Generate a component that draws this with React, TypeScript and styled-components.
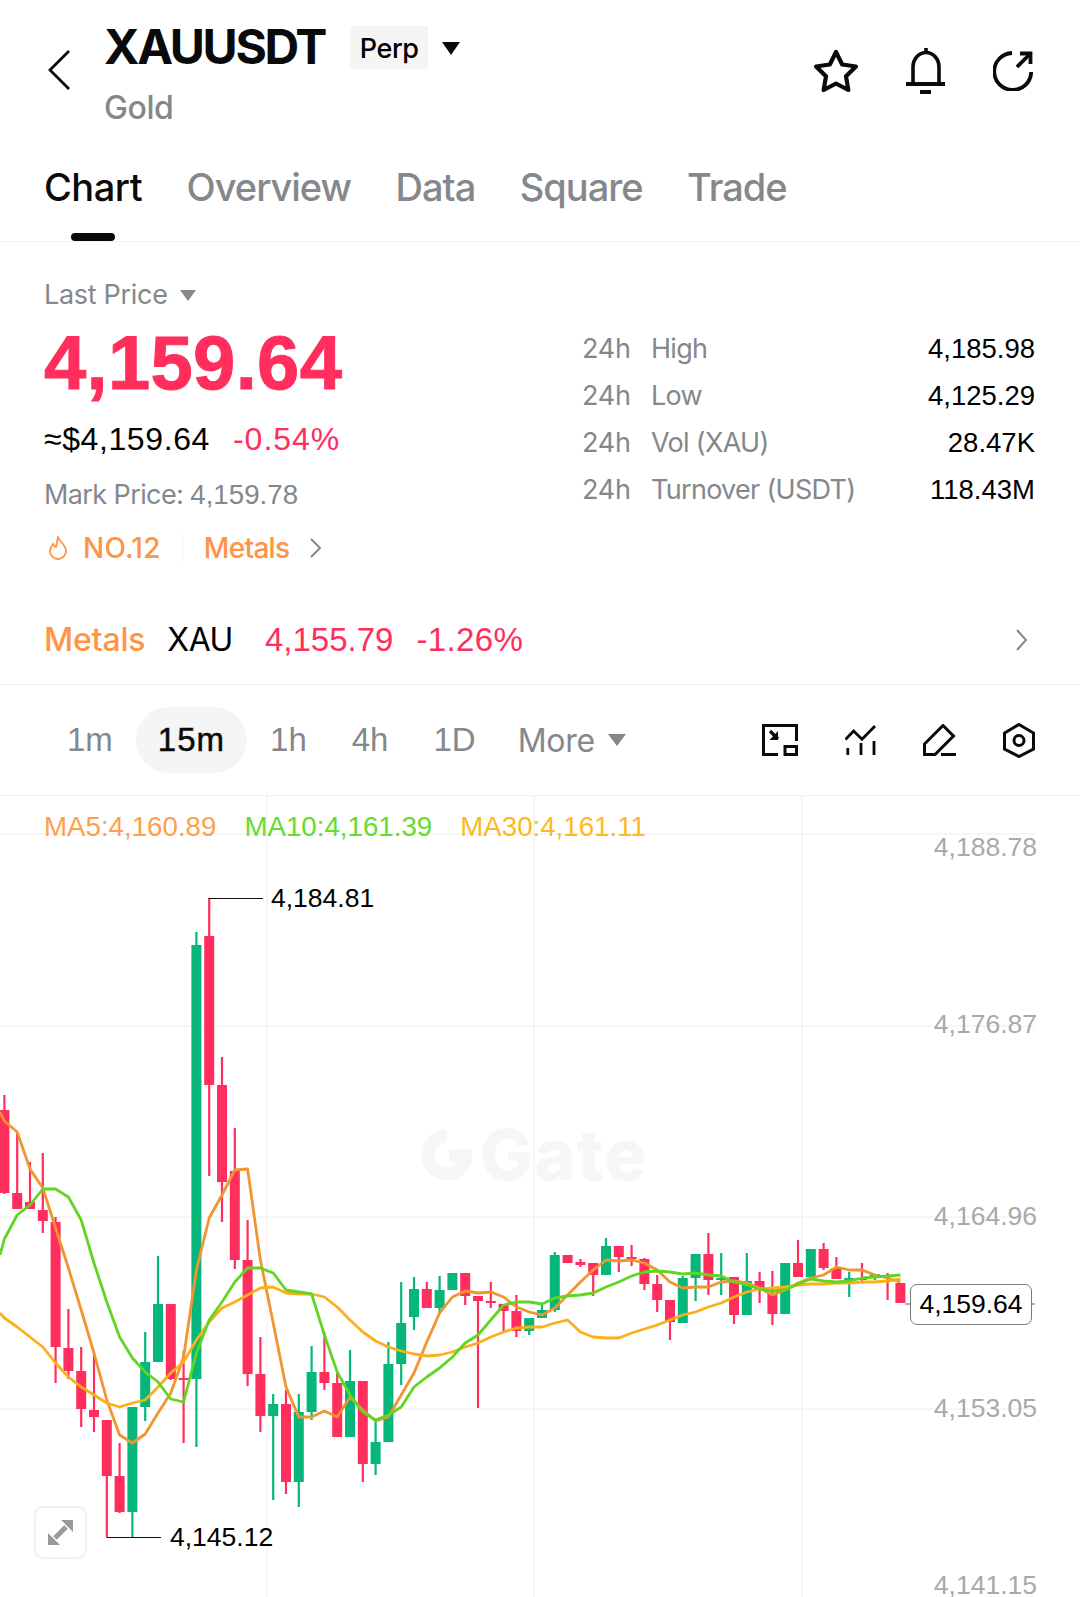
import React from 'react'
import styled, { createGlobalStyle } from 'styled-components'

const RED = '#ff2e5d'
const GREEN = '#07b67a'
const GRAY = '#84888c'
const ORANGE = '#ff9447'
// figures in the reference have Arial widths, labels are closer to Inter
const NUM = '"Liberation Sans", Arial, sans-serif'

const GlobalStyle = createGlobalStyle`
  html, body {
    margin: 0;
    padding: 0;
    background: #fff;
  }
  body {
    font-family: Inter, "Liberation Sans", sans-serif;
    color: #000;
  }
  * {
    box-sizing: border-box;
  }
`

const Page = styled.div`
  width: 1080px;
  height: 1597px;
  overflow: hidden;
  display: flex;
  flex-direction: column;
  background: #fff;
`

const Header = styled.header`
  height: 140px;
  display: flex;
  align-items: center;
  padding: 0 47px 0 48px;
  flex-shrink: 0;
`

const BackIcon = styled.svg`
  width: 22px;
  height: 40px;
  margin-right: 34px;
  flex-shrink: 0;
`

const TitleBlock = styled.div`
  align-self: flex-start;
  padding-top: 23px;
  display: flex;
  flex-direction: column;
`

const TitleRow = styled.div`
  display: flex;
  align-items: center;
  height: 48px;
`

const Symbol = styled.h1`
  margin: 0;
  font-size: 48px;
  line-height: 48px;
  font-weight: 700;
  letter-spacing: -2.3px;
  color: #0a0a0a;
`

const Tag = styled.span`
  margin-left: 25px;
  width: 78px;
  height: 43px;
  padding-top: 3px;
  background: #f5f5f5;
  font-size: 27px;
  font-weight: 500;
  letter-spacing: -0.4px;
  display: flex;
  align-items: center;
  justify-content: center;
`

const Caret = styled.i<{ $size: number; $color: string }>`
  display: inline-block;
  width: 0;
  height: 0;
  border-left: ${({ $size }) => $size}px solid transparent;
  border-right: ${({ $size }) => $size}px solid transparent;
  border-top: ${({ $size }) => $size * 1.4}px solid ${({ $color }) => $color};
`

const TagCaret = styled(Caret)`
  margin: 3px 0 0 14px;
`

const SubName = styled.div`
  margin-top: 19px;
  font-size: 32px;
  line-height: 36px;
  font-weight: 500;
  letter-spacing: -0.4px;
  color: ${GRAY};
`

const HeaderActions = styled.div`
  margin-left: auto;
  display: flex;
  align-items: center;
  gap: 47px;
  padding-top: 1px;
`

const Tabs = styled.nav`
  height: 102px;
  display: flex;
  gap: 44.5px;
  padding: 0 44px;
  border-bottom: 1px solid #f2f2f2;
  flex-shrink: 0;
`

const Tab = styled.div<{ $active?: boolean }>`
  position: relative;
  height: 101px;
  padding-top: 24px;
  font-size: 38px;
  line-height: 46px;
  font-weight: 500;
  letter-spacing: ${({ $active }) => ($active ? '-0.5px' : '-1px')};
  color: ${({ $active }) => ($active ? '#0a0a0a' : GRAY)};

  &::after {
    content: '';
    display: ${({ $active }) => ($active ? 'block' : 'none')};
    position: absolute;
    left: 27px;
    bottom: 0;
    width: 44px;
    height: 8px;
    border-radius: 4px;
    background: #0a0a0a;
  }
`

const Stats = styled.section`
  display: flex;
  justify-content: space-between;
  padding: 36px 45px 29px 44px;
  flex-shrink: 0;
`

const PriceCol = styled.div`
  display: flex;
  flex-direction: column;
`

const PriceLabel = styled.div`
  display: flex;
  align-items: center;
  gap: 12px;
  font-size: 27px;
  line-height: 34px;
  letter-spacing: -0.3px;
  color: ${GRAY};
`

const BigPrice = styled.div`
  margin-top: 6px;
  font-family: ${NUM};
  font-size: 76px;
  line-height: 90px;
  font-weight: 700;
  letter-spacing: 0.3px;
  color: ${RED};
  -webkit-text-stroke: 1px ${RED};
`

const Approx = styled.div`
  margin-top: 11px;
  display: flex;
  gap: 23px;
  font-family: ${NUM};
  font-size: 32px;
  line-height: 40px;
  letter-spacing: 0.6px;
`

const Change = styled.span`
  color: ${RED};
  letter-spacing: 1px;
`

const MarkPrice = styled.div`
  margin-top: 18px;
  font-size: 27px;
  line-height: 36px;
  letter-spacing: -0.6px;
  color: ${GRAY};
`

const MarkValue = styled.span`
  font-family: ${NUM};
  font-size: 27.7px;
  letter-spacing: 0;
`

const TagRow = styled.div`
  margin-top: 17px;
  display: flex;
  align-items: center;
  font-size: 28px;
  line-height: 36px;
  font-weight: 500;
  letter-spacing: -0.7px;
  color: ${ORANGE};
`

const RankText = styled.span`
  letter-spacing: 0.3px;
`

const FlameIcon = styled.svg`
  width: 20px;
  height: 24px;
  margin: 0 15px 0 4px;
`

const TagDivider = styled.span`
  width: 1px;
  height: 28px;
  background: #f2f2f2;
  margin: 0 21px;
`

const SmallChevron = styled.svg`
  width: 13px;
  height: 20px;
  margin-left: 20px;
`

const StatList = styled.div`
  width: 453px;
  margin-top: 47px;
  display: flex;
  flex-direction: column;
`

const StatRow = styled.div`
  height: 47px;
  display: flex;
  align-items: center;
  font-size: 27px;
  letter-spacing: -0.2px;
  color: ${GRAY};
`

const StatPeriod = styled.span`
  width: 69px;
`

const StatLabel = styled.span`
  letter-spacing: -0.7px;
`

const StatValue = styled.span`
  margin-left: auto;
  font-family: ${NUM};
  font-size: 27.5px;
  letter-spacing: 0;
  color: #000;
`

const SectorRow = styled.div`
  height: 90px;
  display: flex;
  align-items: center;
  padding: 0 52px 0 44px;
  border-bottom: 1px solid #f2f2f2;
  font-size: 32px;
  letter-spacing: -0.5px;
  flex-shrink: 0;
`

const SectorName = styled.span`
  color: ${ORANGE};
  font-weight: 500;
  letter-spacing: -0.2px;
  margin-right: 22px;
`

const SectorCode = styled.span`
  margin-right: 32px;
`

const SectorPrice = styled.span`
  font-family: ${NUM};
  font-size: 33px;
  letter-spacing: 0;
  color: ${RED};
  margin-right: 23px;
`

const SectorChange = styled(SectorPrice)`
  letter-spacing: 0.4px;
  margin-right: 0;
`

const SectorChevron = styled.svg`
  width: 13px;
  height: 22px;
  margin-left: auto;
`

const Toolbar = styled.div`
  height: 111px;
  display: flex;
  align-items: center;
  gap: 1px;
  padding: 0 45px;
  border-bottom: 1px solid #f2f2f2;
  flex-shrink: 0;
`

const Interval = styled.div<{ $active?: boolean }>`
  height: 66px;
  padding: 0 22px;
  border-radius: 33px;
  display: flex;
  align-items: center;
  font-family: ${NUM};
  font-size: 33px;
  letter-spacing: ${({ $active }) => ($active ? '1px' : '0')};
  color: ${({ $active }) => ($active ? '#0a0a0a' : GRAY)};
  background: ${({ $active }) => ($active ? '#f5f5f5' : 'transparent')};
  -webkit-text-stroke: ${({ $active }) => ($active ? '0.5px #0a0a0a' : '0')};
`

const MoreInterval = styled(Interval)`
  gap: 13px;
  margin-left: -3px;
  font-family: Inter, sans-serif;
  font-size: 32px;
  letter-spacing: -0.3px;
`

const ToolIcons = styled.div`
  margin-left: auto;
  display: flex;
  align-items: center;
  gap: 47px;
`

const ChartArea = styled.div`
  position: relative;
  flex: 1;
  overflow: hidden;
`

const ChartSvg = styled.svg`
  display: block;
  position: absolute;
  left: 0;
  top: 0;
`

const Watermark = styled.div`
  position: absolute;
  left: 422px;
  top: 331px;
  display: flex;
  align-items: center;
  gap: 8px;
  font-size: 70px;
  line-height: 56px;
  font-weight: 800;
  letter-spacing: 1.5px;
  color: #f5f6f6;
`

const Legend = styled.div`
  position: absolute;
  left: 44px;
  top: 14px;
  display: flex;
  gap: 28px;
  font-family: ${NUM};
  font-size: 27.7px;
  line-height: 34px;
`

const LegendItem = styled.span<{ $color: string }>`
  color: ${({ $color }) => $color};
`

const AxisLabel = styled.span<{ $top: number }>`
  position: absolute;
  right: 43px;
  top: ${({ $top }) => $top}px;
  font-family: ${NUM};
  font-size: 26.5px;
  line-height: 34px;
  color: #a7a9ac;
`

const PeakLabel = styled.span<{ $left: number; $top: number }>`
  position: absolute;
  left: ${({ $left }) => $left}px;
  top: ${({ $top }) => $top}px;
  font-family: ${NUM};
  font-size: 26.5px;
  line-height: 34px;
  color: #000;
`

const LastPriceBox = styled.div`
  position: absolute;
  left: 910px;
  top: 488px;
  width: 122px;
  height: 41px;
  border: 1.5px solid #77797c;
  border-radius: 7px;
  background: #fff;
  display: flex;
  align-items: center;
  justify-content: center;
  font-family: ${NUM};
  font-size: 26.5px;
`

const ExpandButton = styled.div`
  position: absolute;
  left: 34px;
  top: 710px;
  width: 53px;
  height: 53px;
  border: 2px solid #f1f1f1;
  border-radius: 9px;
  background: #fff;
  display: flex;
  align-items: center;
  justify-content: center;
`

// [up?, wick top, wick bottom, body top, body bottom], page coords
type Candle = [number, number, number, number, number]
const candles: Candle[] = [
  [0, 1095, 1194, 1110, 1193],
  [0, 1133, 1209, 1193, 1209],
  [0, 1162, 1209, 1202, 1209],
  [0, 1153, 1233, 1210, 1221],
  [0, 1217, 1383, 1222, 1347],
  [0, 1309, 1379, 1348, 1371],
  [0, 1347, 1427, 1371, 1409],
  [0, 1352, 1432, 1410, 1417],
  [0, 1420, 1537, 1420, 1476],
  [0, 1443, 1513, 1476, 1512],
  [1, 1407, 1537, 1407, 1512],
  [1, 1332, 1421, 1362, 1407],
  [1, 1256, 1362, 1304, 1362],
  [0, 1304, 1380, 1304, 1379],
  [0, 1351, 1443, 1378, 1380],
  [1, 932, 1447, 945, 1379],
  [0, 898, 1176, 936, 1085],
  [0, 1057, 1222, 1085, 1182],
  [0, 1128, 1269, 1171, 1260],
  [0, 1220, 1386, 1260, 1374],
  [0, 1337, 1432, 1374, 1416],
  [1, 1394, 1500, 1404, 1416],
  [0, 1390, 1494, 1404, 1482],
  [1, 1394, 1507, 1412, 1482],
  [1, 1346, 1420, 1372, 1412],
  [0, 1332, 1390, 1372, 1383],
  [0, 1373, 1437, 1383, 1437],
  [1, 1350, 1437, 1381, 1437],
  [0, 1381, 1482, 1381, 1464],
  [1, 1420, 1475, 1442, 1464],
  [1, 1342, 1442, 1364, 1442],
  [1, 1282, 1385, 1323, 1364],
  [1, 1277, 1330, 1289, 1317],
  [0, 1282, 1308, 1289, 1308],
  [1, 1276, 1313, 1290, 1308],
  [1, 1273, 1290, 1273, 1290],
  [0, 1273, 1305, 1273, 1296],
  [0, 1296, 1408, 1296, 1301],
  [0, 1282, 1308, 1301, 1303],
  [0, 1304, 1333, 1304, 1311],
  [0, 1295, 1337, 1311, 1331],
  [1, 1318, 1335, 1318, 1331],
  [1, 1305, 1318, 1310, 1318],
  [1, 1252, 1312, 1255, 1310],
  [0, 1255, 1263, 1255, 1263],
  [0, 1259, 1267, 1262, 1265],
  [0, 1263, 1296, 1263, 1275],
  [1, 1238, 1275, 1246, 1275],
  [0, 1246, 1272, 1246, 1257],
  [0, 1245, 1266, 1257, 1259],
  [0, 1258, 1290, 1259, 1284],
  [0, 1275, 1312, 1284, 1300],
  [0, 1300, 1340, 1300, 1322],
  [1, 1276, 1323, 1278, 1323],
  [1, 1254, 1301, 1254, 1278],
  [0, 1233, 1295, 1254, 1280],
  [1, 1253, 1295, 1278, 1280],
  [0, 1277, 1324, 1277, 1315],
  [1, 1253, 1315, 1281, 1315],
  [0, 1272, 1303, 1281, 1290],
  [0, 1271, 1325, 1293, 1314],
  [1, 1263, 1314, 1263, 1314],
  [0, 1240, 1277, 1263, 1277],
  [1, 1249, 1277, 1249, 1277],
  [0, 1243, 1270, 1249, 1268],
  [0, 1257, 1279, 1268, 1279],
  [1, 1272, 1297, 1278, 1280],
  [0, 1263, 1282, 1278, 1280],
  [1, 1274, 1280, 1274, 1276],
  [0, 1273, 1300, 1275, 1277],
  [0, 1283, 1303, 1283, 1303],
]

const candleX = (i: number) => 4.4 + 12.8 * i

const ma5 = [1121, 1132, 1169, 1188, 1228, 1268, 1310, 1353, 1400, 1435, 1443, 1434, 1413, 1393, 1357, 1270, 1218, 1195, 1170, 1169, 1260, 1323, 1387, 1417, 1417, 1411, 1417, 1397, 1410, 1421, 1417, 1395, 1373, 1342, 1313, 1297, 1291, 1293, 1292, 1297, 1307, 1312, 1315, 1308, 1295, 1282, 1270, 1260, 1261, 1260, 1263, 1270, 1282, 1288, 1287, 1287, 1282, 1281, 1283, 1288, 1295, 1290, 1283, 1278, 1275, 1267, 1270, 1270, 1275, 1278, 1282]
const ma10 = [1239, 1215, 1205, 1189, 1189, 1197, 1220, 1263, 1302, 1337, 1358, 1372, 1382, 1399, 1402, 1353, 1320, 1302, 1282, 1268, 1268, 1273, 1290, 1292, 1294, 1335, 1372, 1395, 1412, 1420, 1415, 1407, 1387, 1377, 1368, 1357, 1343, 1335, 1320, 1305, 1302, 1302, 1304, 1298, 1296, 1295, 1293, 1287, 1282, 1276, 1272, 1271, 1272, 1274, 1273, 1275, 1276, 1282, 1285, 1289, 1291, 1290, 1284, 1279, 1281, 1282, 1281, 1278, 1277, 1276, 1275]
const ma30 = [1318, 1327, 1337, 1347, 1363, 1377, 1387, 1395, 1403, 1407, 1403, 1400, 1387, 1373, 1362, 1340, 1322, 1308, 1302, 1295, 1288, 1287, 1293, 1294, 1294, 1297, 1307, 1320, 1332, 1341, 1347, 1351, 1354, 1356, 1355, 1352, 1347, 1343, 1337, 1332, 1328, 1327, 1327, 1323, 1320, 1332, 1337, 1338, 1338, 1333, 1329, 1325, 1320, 1315, 1312, 1307, 1303, 1297, 1292, 1289, 1288, 1287, 1285, 1284, 1284, 1283, 1283, 1282, 1282, 1281, 1279]

const toPoints = (values: number[]) => values.map((y, i) => `${candleX(i)},${y}`).join(' ')

const intervals = ['1m', '15m', '1h', '4h', '1D']
const tabs = ['Chart', 'Overview', 'Data', 'Square', 'Trade']
const stats = [
  { label: 'High', value: '4,185.98' },
  { label: 'Low', value: '4,125.29' },
  { label: 'Vol (XAU)', value: '28.47K' },
  { label: 'Turnover (USDT)', value: '118.43M' },
]
const axis = [
  { value: '4,188.78', top: 34 },
  { value: '4,176.87', top: 211 },
  { value: '4,164.96', top: 403 },
  { value: '4,153.05', top: 595 },
  { value: '4,141.15', top: 772 },
]

function KlineChart() {
  return (
    <ChartSvg width="1080" height="801" viewBox="0 796 1080 801">
      <g stroke="#f3f3f3" strokeWidth="1.5">
        {[834, 1026, 1217, 1409].map((y) => (
          <line key={y} x1="0" x2="1035" y1={y} y2={y} />
        ))}
        {[267, 534, 802].map((x) => (
          <line key={x} x1={x} x2={x} y1="796" y2="1597" />
        ))}
      </g>
      {candles.map(([up, wickTop, wickBottom, bodyTop, bodyBottom], i) => {
        const x = candleX(i)
        const color = up ? GREEN : RED
        return (
          <g key={i} fill={color}>
            <rect x={x - 1.1} y={wickTop} width="2.2" height={wickBottom - wickTop} />
            <rect x={x - 5} y={bodyTop} width="10" height={bodyBottom - bodyTop} />
          </g>
        )
      })}
      <g fill="none" strokeWidth="2.8" strokeLinejoin="round">
        <polyline points={`0,1112 ${toPoints(ma5)}`} stroke="#f0952f" />
        <polyline points={`0,1313 ${toPoints(ma30)}`} stroke="#fbb01a" />
        <polyline points={`0,1255 ${toPoints(ma10)}`} stroke="#62d522" />
      </g>
      <g stroke="#111" strokeWidth="1.2">
        <line x1="208.7" x2="263" y1="898.5" y2="898.5" />
        <line x1="106.5" x2="161" y1="1537.5" y2="1537.5" />
      </g>
      <g stroke="#77797c" strokeWidth="1.2">
        <line x1="905" x2="910" y1="1304" y2="1304" />
        <line x1="1032" x2="1035" y1="1304" y2="1304" />
      </g>
    </ChartSvg>
  )
}

export default function App() {
  return (
    <Page>
      <GlobalStyle />
      <Header>
        <BackIcon viewBox="0 0 22 40" fill="none" stroke="#0a0a0a" strokeWidth="2.8">
          <path d="M21 1 L2 20 L21 39" />
        </BackIcon>
        <TitleBlock>
          <TitleRow>
            <Symbol>XAUUSDT</Symbol>
            <Tag>Perp</Tag>
            <TagCaret $size={9.5} $color="#0a0a0a" />
          </TitleRow>
          <SubName>Gold</SubName>
        </TitleBlock>
        <HeaderActions>
          <svg width="46" height="44" viewBox="0 0 46 44" fill="none" stroke="#0a0a0a" strokeWidth="4.2" strokeLinejoin="round">
            <path d="M23 3 L29.17 15.51 L42.97 17.51 L32.99 27.24 L35.34 40.99 L23 34.5 L10.66 40.99 L13.01 27.24 L3.03 17.51 L16.83 15.51 Z" />
          </svg>
          <svg width="40" height="46" viewBox="0 0 40 46" fill="none" stroke="#0a0a0a" strokeWidth="3.6">
            <path d="M7 35 V19 A13 14.5 0 0 1 33 19 V35" />
            <path d="M0 36 H39" strokeWidth="4" />
            <path d="M14 44 H25" strokeWidth="4" />
            <path d="M20 0 V5" />
          </svg>
          <svg width="40" height="40" viewBox="0 0 40 40" fill="none" stroke="#0a0a0a" strokeWidth="3.8">
            <path d="M19 2 A18.5 18.5 0 1 0 38.2 21" />
            <path d="M24 16 L37 3" />
            <path d="M27 2.5 H37.5 V13" />
          </svg>
        </HeaderActions>
      </Header>

      <Tabs>
        {tabs.map((tab, i) => (
          <Tab key={tab} $active={i === 0}>
            {tab}
          </Tab>
        ))}
      </Tabs>

      <Stats>
        <PriceCol>
          <PriceLabel>
            Last Price
            <Caret $size={8} $color={GRAY} />
          </PriceLabel>
          <BigPrice>4,159.64</BigPrice>
          <Approx>
            <span>≈$4,159.64</span>
            <Change>-0.54%</Change>
          </Approx>
          <MarkPrice>
            Mark Price: <MarkValue>4,159.78</MarkValue>
          </MarkPrice>
          <TagRow>
            <FlameIcon viewBox="0 0 20 24" fill="none" stroke={ORANGE} strokeWidth="1.8">
              <path d="M10 1 C11 5 18 9 18 15 A8 8 0 0 1 2 15 C2 12 3.5 10 5 8 C6 10 7 11 8 11 C9 8 9 4 10 1 Z" />
            </FlameIcon>
            <RankText>NO.12</RankText>
            <TagDivider />
            Metals
            <SmallChevron viewBox="0 0 13 20" fill="none" stroke={GRAY} strokeWidth="2">
              <path d="M2 1 L11 10 L2 19" />
            </SmallChevron>
          </TagRow>
        </PriceCol>
        <StatList>
          {stats.map((stat) => (
            <StatRow key={stat.label}>
              <StatPeriod>24h</StatPeriod>
              <StatLabel>{stat.label}</StatLabel>
              <StatValue>{stat.value}</StatValue>
            </StatRow>
          ))}
        </StatList>
      </Stats>

      <SectorRow>
        <SectorName>Metals</SectorName>
        <SectorCode>XAU</SectorCode>
        <SectorPrice>4,155.79</SectorPrice>
        <SectorChange>-1.26%</SectorChange>
        <SectorChevron viewBox="0 0 13 22" fill="none" stroke={GRAY} strokeWidth="2">
          <path d="M2 1 L11 11 L2 21" />
        </SectorChevron>
      </SectorRow>

      <Toolbar>
        {intervals.map((item) => (
          <Interval key={item} $active={item === '15m'}>
            {item}
          </Interval>
        ))}
        <MoreInterval>
          More
          <Caret $size={9} $color={GRAY} />
        </MoreInterval>
        <ToolIcons>
          <svg width="36" height="32" viewBox="0 0 36 32" fill="none" stroke="#0a0a0a" strokeWidth="3">
            <path d="M16 30.5 H1.5 V1.5 H34.5 V17" />
            <rect x="23" y="22.5" width="11.5" height="8" />
            <path d="M8 7 L16 15" strokeWidth="3.2" />
            <path d="M16 7 V16 H7.5 Z" fill="#0a0a0a" stroke="none" />
          </svg>
          <svg width="31" height="30" viewBox="0 0 31 30" fill="none" stroke="#0a0a0a" strokeWidth="2.8">
            <path d="M0.5 14.5 L8.6 6 L17 14.3 L30 1" />
            <path d="M2.8 23 V30 M16 18 V30 M29 16 V30" />
          </svg>
          <svg width="33" height="32" viewBox="0 0 33 32" fill="none" stroke="#0a0a0a" strokeWidth="3">
            <path d="M20 1.5 L30.5 12 L12 30.5 H1.5 V20 Z" />
            <path d="M18 30.5 H33" />
          </svg>
          <svg width="32" height="35" viewBox="0 0 32 35" fill="none" stroke="#0a0a0a" strokeWidth="3">
            <path d="M16 1.5 L30.5 10 V26 L16 33.5 L1.5 26 V10 Z" />
            <circle cx="16" cy="17.5" r="5" />
          </svg>
        </ToolIcons>
      </Toolbar>

      <ChartArea>
        <Watermark>
          <svg width="50" height="52" viewBox="0 0 50 52" fill="none" stroke="#f5f6f6" strokeWidth="13">
            <path d="M25 7 A19 19 0 1 0 44 27 H27" />
          </svg>
          Gate
        </Watermark>
        <KlineChart />
        <Legend>
          <LegendItem $color="#ff9f4d">MA5:4,160.89</LegendItem>
          <LegendItem $color="#62dd2e">MA10:4,161.39</LegendItem>
          <LegendItem $color="#fdb91f">MA30:4,161.11</LegendItem>
        </Legend>
        {axis.map((tick) => (
          <AxisLabel key={tick.value} $top={tick.top}>
            {tick.value}
          </AxisLabel>
        ))}
        <PeakLabel $left={271} $top={85}>
          4,184.81
        </PeakLabel>
        <PeakLabel $left={170} $top={724}>
          4,145.12
        </PeakLabel>
        <LastPriceBox>4,159.64</LastPriceBox>
        <ExpandButton>
          <svg width="25" height="25" viewBox="0 0 25 25" fill="#9a9a9a" stroke="none">
            <path d="M13 0 H25 V12 Z" />
            <path d="M0 13 V25 H12 Z" />
            <path d="M18 7 L7 18" stroke="#9a9a9a" strokeWidth="5" />
          </svg>
        </ExpandButton>
      </ChartArea>
    </Page>
  )
}
